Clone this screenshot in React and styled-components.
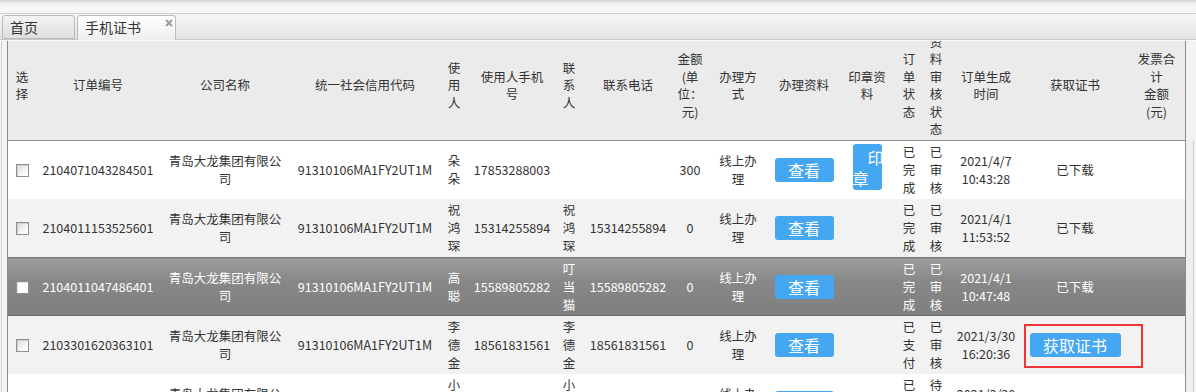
import React from 'react';
import styled, { createGlobalStyle, css } from 'styled-components';

const font = `"Noto Sans CJK SC", "Noto Sans", sans-serif`;
const blue = '#45a6f1';

const GlobalStyle = createGlobalStyle`
  html, body {
    margin: 0;
    padding: 0;
    overflow: hidden;
    background: #f4f4f4;
  }
  body {
    font-family: ${font};
    color: #333;
  }
`;

const columns = [
  { key: 'check', width: 28, title: ['选', '择'] },
  { key: 'orderNo', width: 124, title: ['订单编号'] },
  { key: 'company', width: 130, title: ['公司名称'] },
  { key: 'code', width: 150, title: ['统一社会信用代码'] },
  { key: 'user', width: 28, title: ['使', '用', '人'] },
  { key: 'userPhone', width: 88, title: ['使用人手机', '号'] },
  { key: 'contact', width: 26, title: ['联', '系', '人'] },
  { key: 'contactPhone', width: 92, title: ['联系电话'] },
  { key: 'amount', width: 32, title: ['金额', '(单', '位：', '元)'] },
  { key: 'mode', width: 64, title: ['办理方', '式'] },
  { key: 'docs', width: 68, title: ['办理资料'] },
  { key: 'seal', width: 58, title: ['印章资', '料'] },
  { key: 'status', width: 26, title: ['订', '单', '状', '态'] },
  { key: 'audit', width: 28, title: ['资', '料', '审', '核', '状', '态'] },
  { key: 'time', width: 72, title: ['订单生成', '时间'] },
  { key: 'cert', width: 106, title: ['获取证书'] },
  { key: 'invoice', width: 57, title: ['发票合', '计', '金额', '(元)'] },
];

const company = ['青岛大龙集团有限公', '司'];
const code = '91310106MA1FY2UT1M';
const mode = ['线上办', '理'];

const rows = [
  {
    orderNo: '2104071043284501', company, code, user: ['朵', '朵'], userPhone: '17853288003',
    contact: '', contactPhone: '', amount: '300', mode, seal: true,
    status: ['已', '完', '成'], audit: ['已', '审', '核'], time: ['2021/4/7', '10:43:28'], cert: '已下载',
  },
  {
    orderNo: '2104011153525601', company, code, user: ['祝', '鸿', '琛'], userPhone: '15314255894',
    contact: ['祝', '鸿', '琛'], contactPhone: '15314255894', amount: '0', mode,
    status: ['已', '完', '成'], audit: ['已', '审', '核'], time: ['2021/4/1', '11:53:52'], cert: '已下载',
  },
  {
    orderNo: '2104011047486401', company, code, user: ['高', '聪'], userPhone: '15589805282',
    contact: ['叮', '当', '猫'], contactPhone: '15589805282', amount: '0', mode, hover: true,
    status: ['已', '完', '成'], audit: ['已', '审', '核'], time: ['2021/4/1', '10:47:48'], cert: '已下载',
  },
  {
    orderNo: '2103301620363101', company, code, user: ['李', '德', '金'], userPhone: '18561831561',
    contact: ['李', '德', '金'], contactPhone: '18561831561', amount: '0', mode,
    status: ['已', '支', '付'], audit: ['已', '审', '核'], time: ['2021/3/30', '16:20:36'], cert: 'get',
  },
  {
    orderNo: '2103301512086701', company, code, user: ['小', '萌', '萌'], userPhone: '17806251234',
    contact: ['小', '萌', '萌'], contactPhone: '17806251234', amount: '0', mode,
    status: ['已', '支', '付'], audit: ['待', '审', '核'], time: ['2021/3/30', '15:12:08'], cert: '',
  },
];

const Page = styled.div`
  width: 1196px;
  font-family: ${font};
`;

const TopStrip = styled.div`
  height: 13px;
  background: linear-gradient(to bottom, #d3d3d3 0, #ececec 3px, #f6f6f6 6px, #f6f6f6 100%);
  border-bottom: 1px solid #cfcfcf;
`;

const TabBar = styled.div`
  height: 25px;
  display: flex;
  align-items: flex-end;
  gap: 2px;
  padding-left: 2px;
  background: linear-gradient(to bottom, #f6f6f6, #e3e3e3);
  border-bottom: 1px solid #c8c8c8;
`;

const Tab = styled.div`
  position: relative;
  box-sizing: border-box;
  width: ${(p) => p.$w}px;
  height: 24px;
  padding-left: 7px;
  border: 1px solid #bcbcbc;
  border-radius: 3px 3px 0 0;
  background: linear-gradient(to bottom, #f3f3f3, #dedede);
  font-size: 14px;
  line-height: 22px;
  color: #333;
  white-space: nowrap;
  ${(p) =>
    p.$active &&
    css`
      height: 25px;
      margin-bottom: -1px;
      border-bottom: none;
      background: linear-gradient(to bottom, #ffffff, #eeeeee);
    `}
`;

const CloseIcon = styled.svg`
  position: absolute;
  top: 3px;
  right: 2px;
  width: 8px;
  height: 8px;
`;

const Body = styled.div`
  display: flex;
  border-top: 1px solid #fafafa;
`;

const LeftGutter = styled.div`
  width: 7px;
  flex: none;
  background: linear-gradient(to right, #f4f4f4 1px, #d2d2d2 1px, #d2d2d2 2px, #f4f4f4 2px);
`;

const Grid = styled.div`
  flex: none;
  width: 1177px;
  border-left: 1px solid #8a8a8a;
  border-right: 1px solid #8a8a8a;
  background: #fff;
`;

const RightGutter = styled.div`
  flex: 1;
  display: flex;
  flex-direction: column;
  background: #f3f3f3;
`;

const ScrollTrack = styled.div`
  margin-top: 100px;
  width: 7px;
  height: 260px;
  background: #efefef;
  border-right: 1px solid #cbcbcb;
`;

const Table = styled.table`
  width: 1177px;
  table-layout: fixed;
  border-collapse: collapse;
  font-size: 12.5px;
`;

const Th = styled.th`
  height: 99px;
  padding: 0;
  vertical-align: top;
  background: #ebebeb;
  border-bottom: 1px solid #8e8e8e;
  font-weight: normal;
`;

const HeadBox = styled.div`
  box-sizing: border-box;
  height: 99px;
  padding-bottom: 11px;
  display: flex;
  flex-direction: column;
  justify-content: center;
  align-items: center;
  overflow: hidden;
  line-height: 17.5px;
  white-space: nowrap;
  color: #333;
`;

const Td = styled.td`
  height: 58px;
  padding: 0;
  text-align: center;
  vertical-align: middle;
  line-height: 18px;
  white-space: nowrap;
  color: #333;
  background: ${(p) => (p.$even ? '#f2f2f2' : '#fff')};
  ${(p) =>
    p.$hover &&
    css`
      height: 57px;
      color: #fff;
      background: linear-gradient(to bottom, #9e9e9e 0, #878787 40%, #7f7f7f 100%);
      border-top: 1px solid #777;
      border-bottom: 1px solid #6a6a6a;
    `}
`;

const Checkbox = styled.span`
  display: inline-block;
  vertical-align: middle;
  box-sizing: border-box;
  width: 13px;
  height: 13px;
  margin-top: -2px;
  border: 1px solid #8f8f8f;
  background: ${(p) =>
    p.$hover ? '#fff' : 'linear-gradient(135deg, #d8d8d8 0, #f4f4f4 55%, #ffffff 100%)'};
  box-shadow: inset 1px 1px 0 ${(p) => (p.$hover ? '#e6e6e6' : '#cfcfcf')};
`;

const BlueButton = styled.span`
  display: inline-block;
  vertical-align: middle;
  width: ${(p) => (p.$wide ? 91 : 59)}px;
  height: 24px;
  line-height: 24px;
  border-radius: 3px;
  background: ${blue};
  color: #fff;
  font-size: 16px;
  text-align: center;
`;

const SealButton = styled.span`
  display: block;
  box-sizing: border-box;
  width: 29px;
  height: 46px;
  margin: 0 auto 6px;
  padding-top: 3px;
  border-radius: 3px;
  background: ${blue};
  color: #fff;
  font-size: 16px;
  line-height: 21px;
  text-align: left;
  text-indent: 15px;
  white-space: normal;
  word-break: break-all;
  overflow: hidden;
`;

const Marked = styled.span`
  position: relative;
  display: inline-block;
  vertical-align: middle;
`;

const RedMark = styled.span`
  position: absolute;
  left: -6px;
  top: -9px;
  width: 119px;
  height: 44px;
  box-sizing: border-box;
  border: 2px solid #ee3434;
  pointer-events: none;
`;

const Lines = ({ value }) => {
  if (!Array.isArray(value)) return value || null;
  return value.map((line, i) => <div key={i}>{line}</div>);
};

const renderCell = (key, row) => {
  switch (key) {
    case 'check':
      return <Checkbox $hover={row.hover} />;
    case 'docs':
      return <BlueButton>查看</BlueButton>;
    case 'seal':
      return row.seal ? <SealButton>印章</SealButton> : null;
    case 'cert':
      if (row.cert === 'get') {
        return (
          <Marked>
            <BlueButton $wide>获取证书</BlueButton>
            <RedMark />
          </Marked>
        );
      }
      return row.cert;
    default:
      return <Lines value={row[key]} />;
  }
};

const App = () => {
  return (
    <Page>
      <GlobalStyle />
      <TopStrip />
      <TabBar>
        <Tab $w={73}>首页</Tab>
        <Tab $w={99} $active>
          手机证书
          <CloseIcon viewBox="0 0 8 8">
            <path d="M1 1 L7 7 M7 1 L1 7" stroke="#9b9b9b" strokeWidth="2" />
          </CloseIcon>
        </Tab>
      </TabBar>
      <Body>
        <LeftGutter />
        <Grid>
          <Table>
            <colgroup>
              {columns.map((c) => (
                <col key={c.key} style={{ width: c.width }} />
              ))}
            </colgroup>
            <thead>
              <tr>
                {columns.map((c) => (
                  <Th key={c.key}>
                    <HeadBox>
                      {c.title.map((t, i) => (
                        <div key={i}>{t}</div>
                      ))}
                    </HeadBox>
                  </Th>
                ))}
              </tr>
            </thead>
            <tbody>
              {rows.map((row, r) => (
                <tr key={row.orderNo}>
                  {columns.map((c) => (
                    <Td key={c.key} $even={r % 2 === 1} $hover={row.hover}>
                      {renderCell(c.key, row)}
                    </Td>
                  ))}
                </tr>
              ))}
            </tbody>
          </Table>
        </Grid>
        <RightGutter>
          <ScrollTrack />
        </RightGutter>
      </Body>
    </Page>
  );
};

export default App;
